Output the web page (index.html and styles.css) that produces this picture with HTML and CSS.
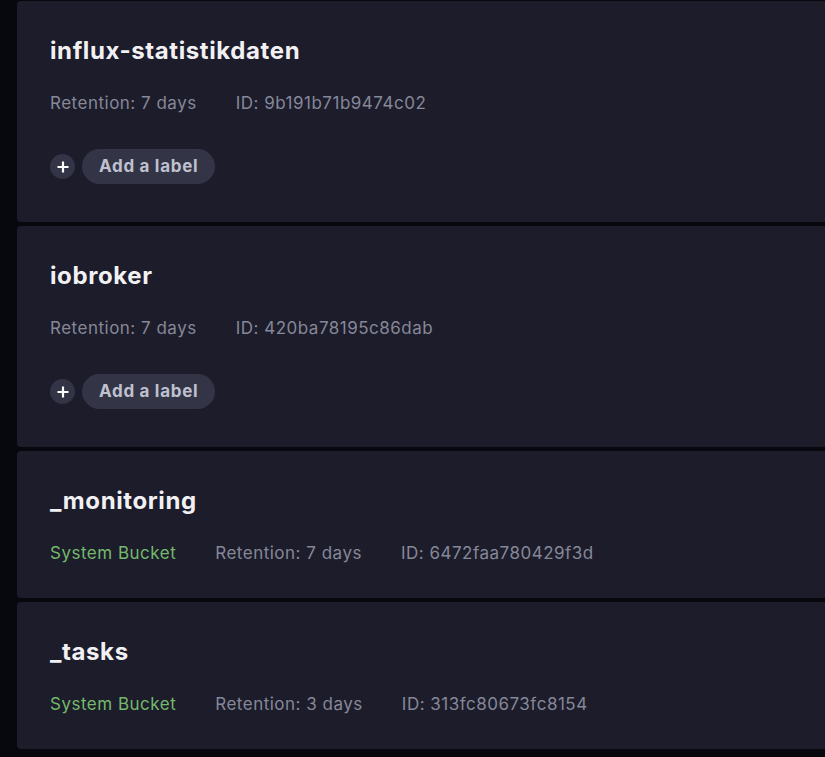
FILE: index.html
```html
<!DOCTYPE html>
<html>
<head>
<meta charset="utf-8">
<link rel="stylesheet" href="styles.css">
</head>
<body>
<div class="list">
  <div class="card">
    <div class="title">influx-statistikdaten</div>
    <div class="meta"><span class="item">Retention: 7 days</span><span class="item">ID: 9b191b71b9474c02</span></div>
    <div class="labels">
      <span class="plus"><svg width="14" height="14" viewBox="0 0 14 14"><path d="M7 1.5v11M1.5 7h11" stroke="#fff" stroke-width="2.2" stroke-linecap="butt"/></svg></span>
      <span class="pill">Add a label</span>
    </div>
  </div>
  <div class="card">
    <div class="title">iobroker</div>
    <div class="meta"><span class="item">Retention: 7 days</span><span class="item">ID: 420ba78195c86dab</span></div>
    <div class="labels">
      <span class="plus"><svg width="14" height="14" viewBox="0 0 14 14"><path d="M7 1.5v11M1.5 7h11" stroke="#fff" stroke-width="2.2" stroke-linecap="butt"/></svg></span>
      <span class="pill">Add a label</span>
    </div>
  </div>
  <div class="card">
    <div class="title">_monitoring</div>
    <div class="meta"><span class="item sys">System Bucket</span><span class="item">Retention: 7 days</span><span class="item">ID: 6472faa780429f3d</span></div>
  </div>
  <div class="card">
    <div class="title">_tasks</div>
    <div class="meta"><span class="item sys">System Bucket</span><span class="item">Retention: 3 days</span><span class="item">ID: 313fc80673fc8154</span></div>
  </div>
</div>
</body>
</html>
```
FILE: styles.css
```css
html, body {
  margin: 0;
  padding: 0;
  background: #07070e;
  overflow: hidden;
  height: 757px;
}
body {
  font-family: "Inter", "Noto Sans", sans-serif;
}
.list {
  display: flex;
  flex-direction: column;
  gap: 4px;
  padding: 1px 0 0 17px;
}
.card {
  background: #1d1c2b;
  border-radius: 4px;
  margin-right: -6px;
  padding: 34px 33px 33px 33px;
}
.title {
  color: #f1f1f4;
  font-size: 24px;
  font-weight: 700;
  line-height: 32px;
  letter-spacing: 0.6px;
}
.meta {
  margin-top: 24px;
  display: flex;
  font-size: 17px;
  line-height: 24px;
  color: #858898;
  letter-spacing: 0.5px;
}
.item {
  margin-right: 39px;
}
.sys {
  color: #73b96b;
}
.labels {
  margin-top: 34px;
  margin-bottom: 5px;
  display: flex;
  align-items: center;
  gap: 7px;
  height: 35px;
}
.plus {
  width: 25px;
  height: 25px;
  border-radius: 50%;
  background: #343447;
  display: flex;
  align-items: center;
  justify-content: center;
}
.plus svg { display: block; }
.pill {
  height: 35px;
  border-radius: 18px;
  background: #343447;
  color: #bfc2ce;
  font-size: 17px;
  font-weight: 700;
  line-height: 35px;
  padding: 0 17px;
  letter-spacing: 0.7px;
}
```
